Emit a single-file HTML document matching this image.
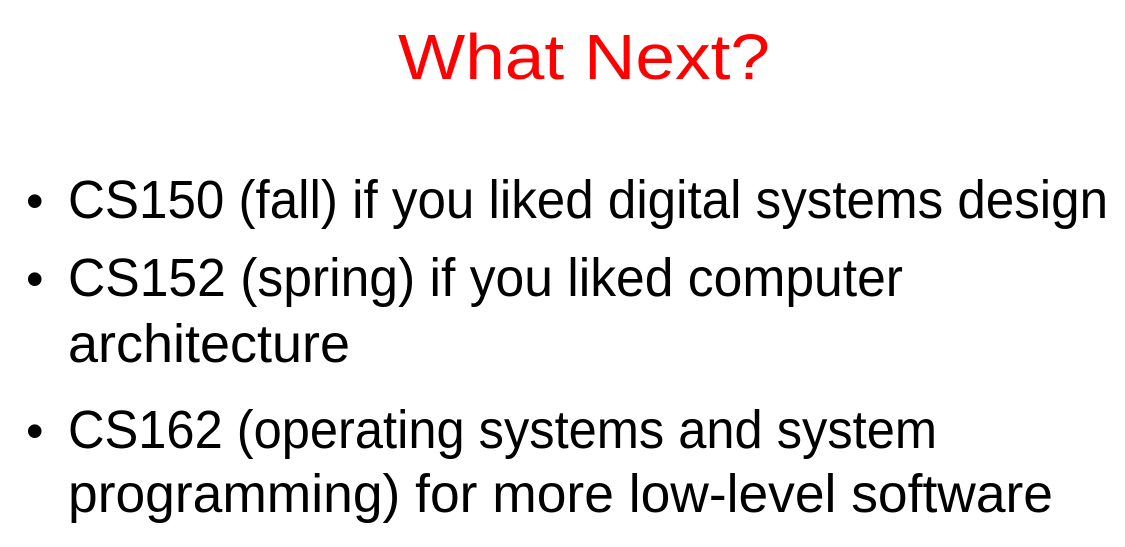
<!DOCTYPE html>
<html><head><meta charset="utf-8"><style>
html,body{margin:0;padding:0;background:#fff;width:1125px;height:547px;overflow:hidden}
svg{display:block}
text{font-family:"Liberation Sans",sans-serif}
</style></head><body>
<svg width="1125" height="547" viewBox="0 0 1125 547">
<text x="398" y="79" font-size="64" fill="#ff0000" textLength="372" lengthAdjust="spacingAndGlyphs">What Next?</text>
<g font-size="54" fill="#000">
<text x="26" y="218" font-size="50">•</text>
<text x="68" y="218" textLength="1040" lengthAdjust="spacingAndGlyphs">CS150 (fall) if you liked digital systems design</text>
<text x="26" y="296" font-size="50">•</text>
<text x="68" y="296" textLength="835" lengthAdjust="spacingAndGlyphs">CS152 (spring) if you liked computer</text>
<text x="68" y="362" textLength="282" lengthAdjust="spacingAndGlyphs">architecture</text>
<text x="26" y="448" font-size="50">•</text>
<text x="68" y="448" textLength="869" lengthAdjust="spacingAndGlyphs">CS162 (operating systems and system</text>
<text x="68" y="512" textLength="985" lengthAdjust="spacingAndGlyphs">programming) for more low-level software</text>
</g>
</svg>
</body></html>
